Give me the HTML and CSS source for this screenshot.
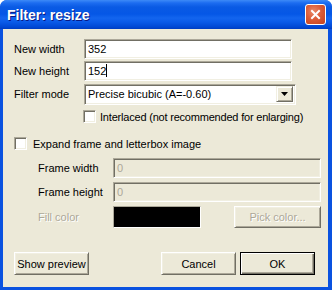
FILE: index.html
```html
<!DOCTYPE html>
<html lang="en">

<head>
    <meta charset="utf-8">
    <title>Filter: resize</title>
    <link rel="stylesheet" href="styles.css">
</head>

<body>
    <div class="window">
        <div class="titlebar">
            <span class="title">Filter: resize</span>
            <span class="close">
                <svg width="13" height="13" viewBox="0 0 13 13">
                    <path d="M3 3 L10 10 M10 3 L3 10" stroke="#fff" stroke-width="2" stroke-linecap="square"/>
                </svg>
            </span>
        </div>

        <div class="client">
            <div class="fields">
                <label>New width</label>
                <div class="edit">352</div>

                <label>New height</label>
                <div class="edit">152<span class="caret"></span></div>

                <label>Filter mode</label>
                <div class="combo">
                    <span class="combo-text">Precise bicubic (A=-0.60)</span>
                    <span class="combo-btn">
                        <svg width="7" height="4" viewBox="0 0 7 4"><path d="M0 0 H7 L3.5 4 Z" fill="#000"/></svg>
                    </span>
                </div>

                <span></span>
                <div class="check-row">
                    <span class="checkbox"></span>
                    <span class="long">Interlaced (not recommended for enlarging)</span>
                </div>
            </div>

            <div class="check-row expand">
                <span class="checkbox"></span>
                <span>Expand frame and letterbox image</span>
            </div>

            <div class="fields sub">
                <label>Frame width</label>
                <div class="edit disabled">0</div>

                <label>Frame height</label>
                <div class="edit disabled">0</div>

                <label class="grey">Fill color</label>
                <div class="fill-row">
                    <span class="swatch"></span>
                    <span class="button grey">Pick color...</span>
                </div>
            </div>

            <div class="buttons">
                <span class="button">Show preview</span>
                <span class="spacer"></span>
                <span class="button">Cancel</span>
                <span class="button default">OK</span>
            </div>
        </div>
    </div>
</body>

</html>
```

FILE: styles.css
```css
body {
    margin: 0;
    font-family: 'Liberation Sans', Arial, sans-serif;
    font-size: 11px;
    color: #000;
}

.window {
    width: 332px;
    height: 290px;
    display: flex;
    flex-direction: column;
    background: #0a52e0;
    border-radius: 7px 7px 0 0;
    overflow: hidden;
}

.titlebar {
    height: 29px;
    display: flex;
    align-items: center;
    padding: 0 6px 0 7px;
    box-sizing: border-box;
    background: linear-gradient(#3d8af7 0px, #1c6cf0 3px, #0a5ae4 7px, #0557e6 14px, #1365ee 18px, #0a5ae8 22px, #0048d4 27px, #003cc0 29px);
}

.title {
    flex: 1;
    color: #fff;
    font-weight: bold;
    font-size: 14px;
    text-shadow: 1px 1px #0a1883;
}

.close {
    width: 21px;
    height: 21px;
    box-sizing: border-box;
    border: 1px solid #fff;
    border-radius: 3px;
    background: radial-gradient(circle at 40% 35%, #e98a6a 0%, #dc5c38 45%, #c4411c 100%);
    display: flex;
    align-items: center;
    justify-content: center;
}

.client {
    flex: 1;
    margin: 0 4px 3px 3px;
    background: #ece9d8;
    padding: 10px 0 0 11px;
    white-space: nowrap;
}

.fields {
    display: grid;
    grid-template-columns: 70px 208px;
    row-gap: 2px;
    align-items: center;
}

.edit,
.combo {
    height: 20px;
    box-sizing: border-box;
    background: #fff;
    border-top: 1px solid #aca899;
    border-left: 1px solid #aca899;
    border-right: 1px solid #fff;
    border-bottom: 1px solid #fff;
    box-shadow: inset 1px 1px #716f64, inset -1px -1px #f1efe2;
    padding: 2px 0 0 3px;
    line-height: 14px;
}

.caret {
    display: inline-block;
    width: 1px;
    height: 13px;
    background: #000;
    vertical-align: -2px;
}

.combo {
    height: 21px;
    margin-top: 1px;
    display: flex;
    padding: 2px 2px 2px 3px;
    width: 212px;
}

.combo-text {
    flex: 1;
}

.combo-btn {
    width: 17px;
    box-sizing: border-box;
    background: #ece9d8;
    border-top: 1px solid #f1efe2;
    border-left: 1px solid #f1efe2;
    border-right: 1px solid #716f64;
    border-bottom: 1px solid #716f64;
    box-shadow: inset 1px 1px #fff, inset -1px -1px #aca899;
    display: flex;
    align-items: center;
    justify-content: center;
    margin-top: -1px;
}

.check-row {
    display: flex;
    align-items: center;
    gap: 4px;
    height: 17px;
    margin-top: 1px;
}

.long {
    letter-spacing: -0.2px;
}

.checkbox {
    width: 13px;
    height: 13px;
    flex-shrink: 0;
    box-sizing: border-box;
    background: #fff;
    border-top: 1px solid #aca899;
    border-left: 1px solid #aca899;
    border-right: 1px solid #fff;
    border-bottom: 1px solid #fff;
    box-shadow: inset 1px 1px #716f64, inset -1px -1px #f1efe2;
    margin-left: -1px;
}

.expand {
    margin-top: 10px;
    gap: 6px;
}

.expand .checkbox {
    margin-left: 0;
}

.sub {
    margin-top: 6px;
    padding-left: 24px;
    grid-template-columns: 75px 208px;
    row-gap: 4px;
}

.edit.disabled {
    background: #ece9d8;
    color: #aca899;
}

.grey {
    color: #aca899;
    text-shadow: 1px 1px #fff;
}

.fill-row {
    display: flex;
    justify-content: space-between;
}

.swatch {
    width: 88px;
    height: 22px;
    box-sizing: border-box;
    background: #000;
    border-top: 1px solid #aca899;
    border-left: 1px solid #aca899;
    border-right: 1px solid #fff;
    border-bottom: 1px solid #fff;
}

.button {
    width: 75px;
    height: 23px;
    box-sizing: border-box;
    display: flex;
    align-items: center;
    justify-content: center;
    background: #ece9d8;
    border-top: 1px solid #fff;
    border-left: 1px solid #fff;
    border-right: 1px solid #716f64;
    border-bottom: 1px solid #716f64;
    box-shadow: inset 1px 1px #f1efe2, inset -1px -1px #aca899;
}

.fill-row .button {
    width: 87px;
    height: 22px;
}

.buttons {
    display: flex;
    gap: 4px;
    margin-top: 24px;
    padding-right: 13px;
}

.spacer {
    flex: 1;
}

.button.default {
    border: 1px solid #000;
    box-shadow: inset 1px 1px #fff, inset -1px -1px #716f64, inset -2px -2px #aca899;
}
```
